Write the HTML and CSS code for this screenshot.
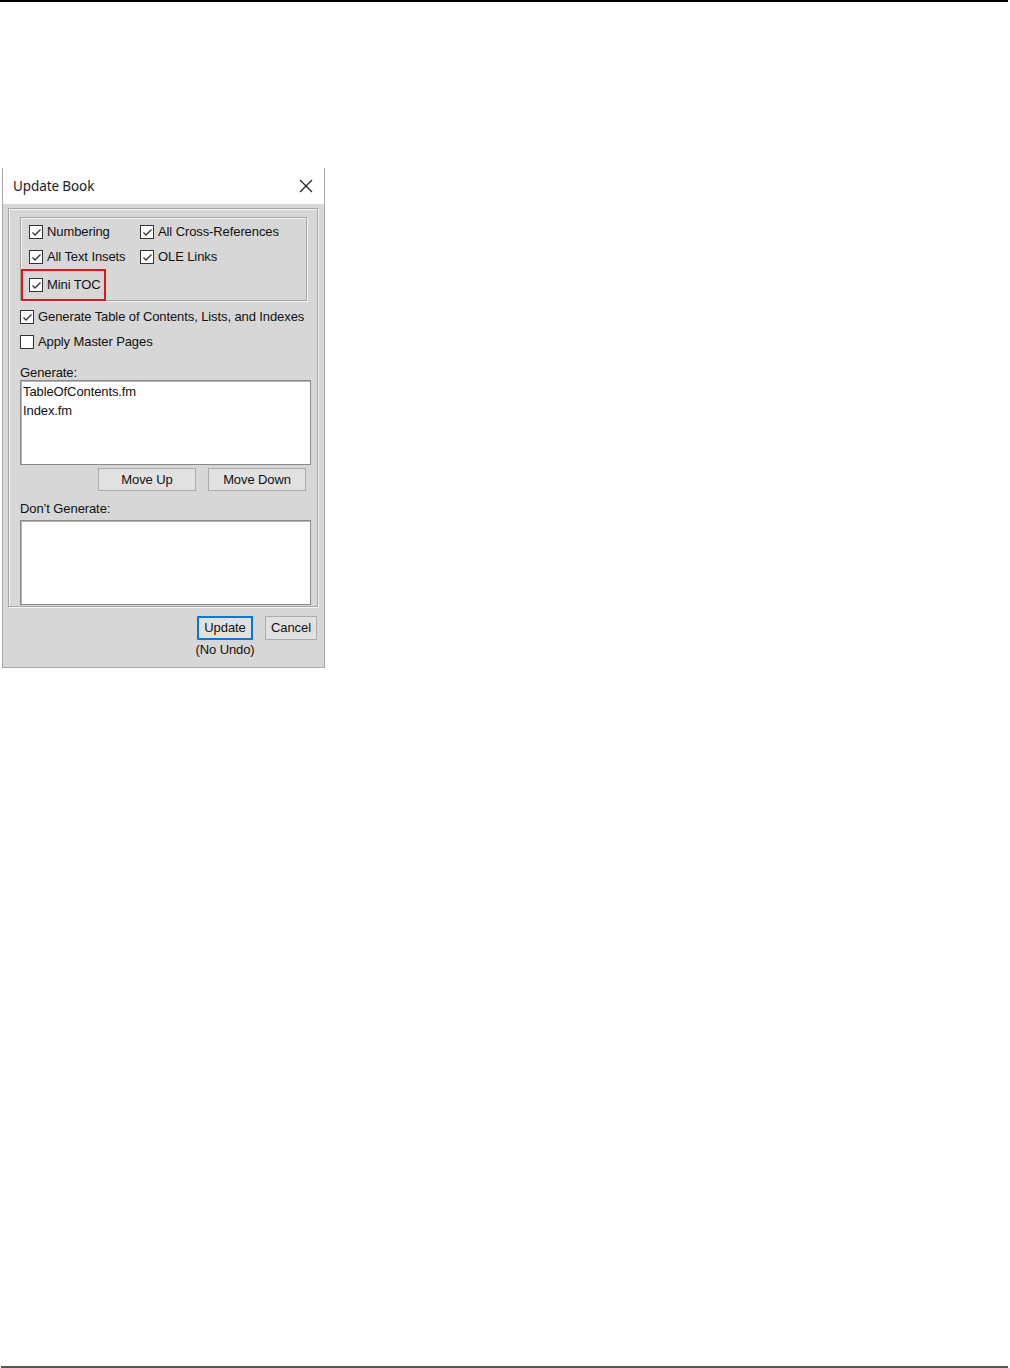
FILE: index.html
```html
<!DOCTYPE html>
<html>
<head>
<meta charset="utf-8">
<link rel="stylesheet" href="styles.css">
</head>
<body>
<div class="page">
  <div class="top-rule"></div>
  <div class="dialog">
    <div class="titlebar">
      <span class="title">Update Book</span>
      <svg class="close" width="14" height="14" viewBox="0 0 14 14"><path d="M1 1 L13 13 M13 1 L1 13" stroke="#222" stroke-width="1.2" fill="none"/></svg>
    </div>
    <div class="body">
      <div class="frame">
        <div class="group">
          <div class="grid">
            <label class="cb"><span class="box"><svg class="tick" width="11" height="11" viewBox="0 0 11 11"><path d="M1.5 5.5 L4 8 L9.5 2.5"/></svg></span><span>Numbering</span></label>
            <label class="cb"><span class="box"><svg class="tick" width="11" height="11" viewBox="0 0 11 11"><path d="M1.5 5.5 L4 8 L9.5 2.5"/></svg></span><span>All Cross-References</span></label>
            <label class="cb"><span class="box"><svg class="tick" width="11" height="11" viewBox="0 0 11 11"><path d="M1.5 5.5 L4 8 L9.5 2.5"/></svg></span><span>All Text Insets</span></label>
            <label class="cb"><span class="box"><svg class="tick" width="11" height="11" viewBox="0 0 11 11"><path d="M1.5 5.5 L4 8 L9.5 2.5"/></svg></span><span>OLE Links</span></label>
          </div>
          <div class="highlight">
            <label class="cb"><span class="box"><svg class="tick" width="11" height="11" viewBox="0 0 11 11"><path d="M1.5 5.5 L4 8 L9.5 2.5"/></svg></span><span>Mini TOC</span></label>
          </div>
        </div>
        <label class="cb row-gen"><span class="box"><svg class="tick" width="11" height="11" viewBox="0 0 11 11"><path d="M1.5 5.5 L4 8 L9.5 2.5"/></svg></span><span>Generate Table of Contents, Lists, and Indexes</span></label>
        <label class="cb row-apply"><span class="box"></span><span>Apply Master Pages</span></label>
        <div class="label lbl-gen">Generate:</div>
        <div class="listbox">
          <div class="item">TableOfContents.fm</div>
          <div class="item">Index.fm</div>
        </div>
        <div class="move-row">
          <button class="btn move-up">Move Up</button>
          <button class="btn move-down">Move Down</button>
        </div>
        <div class="label lbl-dont">Don’t Generate:</div>
        <div class="listbox"></div>
      </div>
      <div class="actions">
        <div class="update-col">
          <button class="btn update">Update</button>
          <div class="noundo">(No Undo)</div>
        </div>
        <button class="btn cancel">Cancel</button>
      </div>
    </div>
  </div>
  <div class="bottom-rule"></div>
</div>
</body>
</html>
```

FILE: styles.css
```css
html, body {
  margin: 0;
  padding: 0;
  background: #fff;
}
.page {
  width: 1010px;
  height: 1368px;
  display: flex;
  flex-direction: column;
  font-family: "Liberation Sans", Arial, sans-serif;
  color: #111;
}
.top-rule {
  width: 1008px;
  height: 2px;
  background: #000;
  flex: none;
}
.bottom-rule {
  margin-top: auto;
  margin-left: 1px;
  width: 1007px;
  height: 2px;
  background: #555;
  flex: none;
}
.dialog {
  margin: 166px 0 0 2px;
  width: 323px;
  height: 500px;
  box-sizing: border-box;
  border: 1px solid #a8a8a8;
  border-top: none;
  display: flex;
  flex-direction: column;
  flex: none;
}
.titlebar {
  height: 36px;
  background: #fff;
  display: flex;
  align-items: center;
  justify-content: space-between;
  padding: 0 11px 0 10px;
  flex: none;
}
.title {
  font-family: "Noto Sans", "Open Sans", sans-serif;
  font-size: 13.5px;
  color: #1a1a2a;
  letter-spacing: -0.1px;
}
.body {
  flex: 1;
  background: #d7d7d7;
  padding: 4px 0 0 5px;
  font-size: 13px;
  letter-spacing: -0.1px;
}
.frame {
  width: 310px;
  height: 399px;
  box-sizing: border-box;
  border: 1px solid #a4a4a4;
  box-shadow: inset 1px 1px 0 #f4f4f4, 1px 1px 0 #f4f4f4;
  padding: 8px 0 0 11px;
  display: flex;
  flex-direction: column;
}
.group {
  width: 287px;
  height: 84px;
  box-sizing: border-box;
  border: 1px solid #a4a4a4;
  box-shadow: inset 1px 1px 0 #f4f4f4, 1px 1px 0 #f4f4f4;
  padding: 7px 0 0 8px;
  flex: none;
}
.grid {
  display: grid;
  grid-template-columns: 111px auto;
  row-gap: 11px;
}
.cb {
  display: flex;
  align-items: center;
  height: 14px;
  line-height: 14px;
  white-space: nowrap;
}
.box {
  width: 14px;
  height: 14px;
  box-sizing: border-box;
  border: 1px solid #333;
  background: #fff;
  margin-right: 4px;
  flex: none;
  display: flex;
  align-items: center;
  justify-content: center;
}
.tick {
  display: block;
}
.tick path {
  fill: none;
  stroke: #333;
  stroke-width: 1.3;
}
.highlight {
  margin: 5px 0 0 -8px;
  width: 85px;
  height: 32px;
  box-sizing: border-box;
  border: 2px solid #e0151b;
  padding: 7px 0 0 6px;
}
.row-gen {
  margin-top: 9px;
}
.row-apply {
  margin-top: 11px;
}
.label {
  height: 14px;
  line-height: 14px;
}
.lbl-gen {
  margin-top: 17px;
}
.listbox {
  margin-top: 0;
  width: 291px;
  height: 85px;
  box-sizing: border-box;
  background: #fff;
  border: 1px solid #8a8a8a;
  box-shadow: inset 1px 1px 0 #b4b4b4;
  padding: 4px 0 0 2px;
  flex: none;
}
.item {
  height: 19px;
  line-height: 14px;
}
.move-row {
  display: flex;
  margin: 3px 0 0 78px;
  gap: 12px;
}
.btn {
  font-family: "Liberation Sans", Arial, sans-serif;
  font-size: 13px;
  letter-spacing: -0.1px;
  color: #111;
  background: #e1e1e1;
  border: 1px solid #adadad;
  padding: 0;
  margin: 0;
  box-sizing: border-box;
  height: 23px;
  line-height: 20px;
}
.move-up, .move-down {
  width: 98px;
}
.lbl-dont {
  margin-top: 11px;
}
.lbl-dont + .listbox {
  margin-top: 4px;
}
.actions {
  display: flex;
  align-items: flex-start;
  margin: 9px 0 0 189px;
  gap: 12px;
}
.update-col {
  display: flex;
  flex-direction: column;
  align-items: center;
  width: 56px;
}
.update {
  width: 56px;
  height: 24px;
  border: 2px solid #0a78d4;
  box-shadow: inset 0 0 0 1px #e1e1e1;
}
.noundo {
  margin-top: 3px;
  height: 14px;
  line-height: 14px;
  white-space: nowrap;
}
.cancel {
  width: 52px;
  height: 24px;
}
```
